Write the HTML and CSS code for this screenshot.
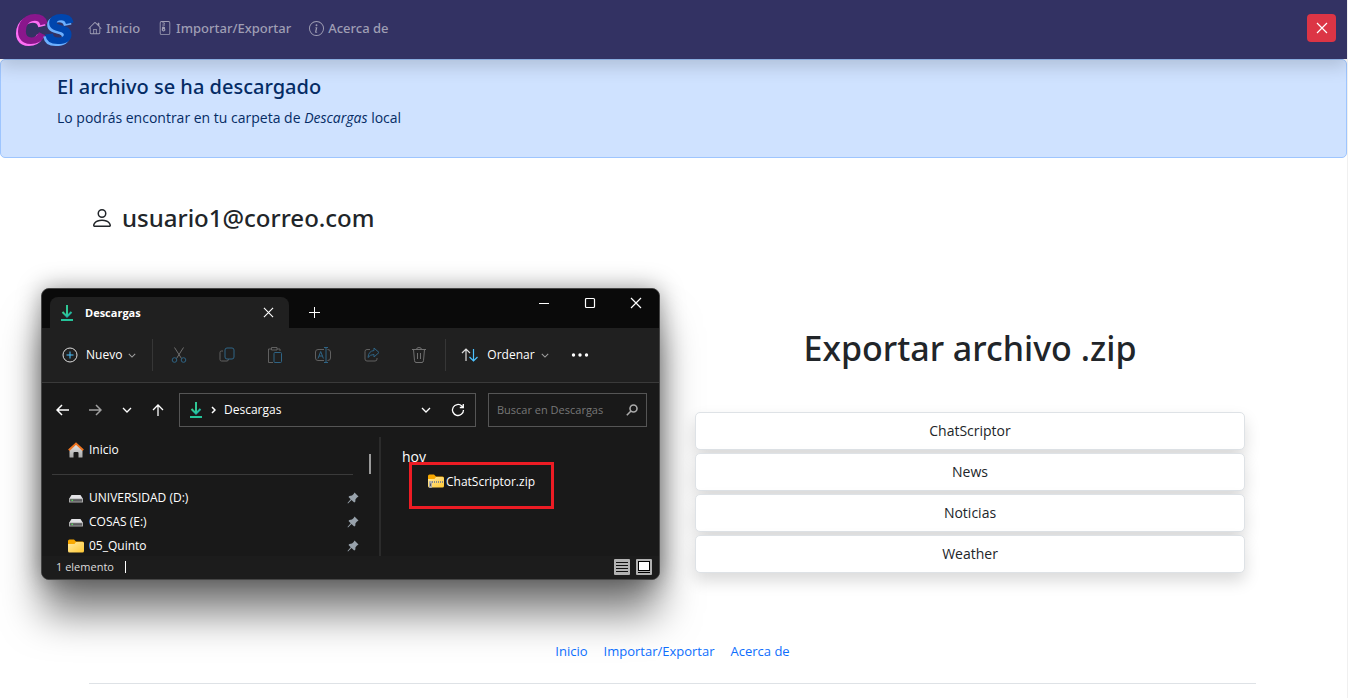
FILE: index.html
```html
<!DOCTYPE html>
<html lang="es">
<head>
<meta charset="utf-8">
<title>ChatScriptor</title>
<link rel="stylesheet" href="styles.css">
</head>
<body>
<svg class="defs" aria-hidden="true">
  <linearGradient id="teal" x1="0" y1="0" x2="1" y2="1"><stop offset="0" stop-color="#3ad08c"/><stop offset="1" stop-color="#12a5ad"/></linearGradient>
  <linearGradient id="gold" x1="0" y1="0" x2="1" y2="1"><stop offset="0" stop-color="#ffe9a0"/><stop offset="1" stop-color="#ffc833"/></linearGradient>
  <linearGradient id="wall" x1="0" y1="0" x2="0" y2="1"><stop offset="0" stop-color="#e8e8e8"/><stop offset="1" stop-color="#a8a8a8"/></linearGradient>
  <symbol id="download" viewBox="0 0 14 18"><path d="M2.500 8 7 12.500 11.500 8" fill="none" stroke="url(#teal)" stroke-width="2"/><path d="M7 1v11" stroke="#2fc795" stroke-width="2"/><path d="M1 16h12" stroke="#25c49a" stroke-width="2"/></symbol>
  <symbol id="chevron" viewBox="0 0 10 6"><path d="M1 1l4 4 4-4" fill="none" stroke="currentColor" stroke-width="1.300"/></symbol>
  <symbol id="cross" viewBox="0 0 12 12"><path d="M1 1l10 10M11 1L1 11" fill="none" stroke="currentColor" stroke-width="1.200"/></symbol>
  <symbol id="drive" viewBox="0 0 16 16"><path d="M3.500 5h9L15 9H1z" fill="#e3e3e6"/><rect x="1" y="8.500" width="14" height="4" rx=".6" fill="#aaa"/><rect x="2" y="9.200" width="12" height="2.400" fill="#5b5b5e"/><rect x="3.500" y="9.700" width="1.500" height="1.300" fill="#55dd55"/></symbol>
  <symbol id="folder" viewBox="0 0 16 14"><path d="M0 2q0-1.500 1.500-1.500H6L8 2.500h6.500Q16 2.500 16 4v3H0z" fill="#f8a800"/><path d="M0 5h6.500L8 3h6.500Q16 3 16 4.500V12q0 1.500-1.500 1.500h-13Q0 13.500 0 12z" fill="url(#gold)"/></symbol>
  <symbol id="pin" viewBox="0 0 12 12"><path d="M7.500.5 11.500 4.500 10 5.500 8.500 7.200 8.300 9.700 7.200 10.500 4.500 8 1 11.500.5 11 3.700 7.300 1.500 5 2.400 4 5 3.500 6.700 2z" fill="#98a2ab"/></symbol>
</svg>

<nav class="navbar">
  <a class="brand" href="#" aria-label="CS">
    <svg width="60" height="38" viewBox="0 0 60 38">
      <text class="brand-c" x="2" y="32">C</text>
      <text class="brand-s" x="31" y="32">S</text>
    </svg>
  </a>
  <a class="nav-link" href="#">
    <svg width="14" height="14" viewBox="0 0 16 16" fill="currentColor"><path d="M8.707 1.500a1 1 0 0 0-1.414 0L.646 8.146a.5.5 0 0 0 .708.708L2 8.207V13.500A1.500 1.500 0 0 0 3.500 15h9a1.500 1.500 0 0 0 1.500-1.500V8.207l.646.647a.5.5 0 0 0 .708-.708L13 5.793V2.500a.5.5 0 0 0-.5-.5h-1a.5.5 0 0 0-.5.5v1.293zM13 7.207V13.500a.5.5 0 0 1-.5.5H10V9H6v5H3.500a.5.5 0 0 1-.5-.5V7.207l5-5zM7 10h2v4H7z" fill-rule="evenodd"/></svg>
    Inicio</a>
  <a class="nav-link" href="#">
    <svg width="14" height="14" viewBox="0 0 16 16" fill="currentColor"><path fill-rule="evenodd" d="M4.500 7.500a1 1 0 0 1 1-1h1.500a1 1 0 0 1 1 1v.938l.4 1.599a1 1 0 0 1-.416 1.074l-.93.620a1 1 0 0 1-1.409 0l-.93-.620a1 1 0 0 1-.415-1.074l.2-1.599zM6 9v1.500h1V9z"/><path d="M2 2a2 2 0 0 1 2-2h8a2 2 0 0 1 2 2v12a2 2 0 0 1-2 2H4a2 2 0 0 1-2-2zm2-1a1 1 0 0 0-1 1v12a1 1 0 0 0 1 1h8a1 1 0 0 0 1-1V2a1 1 0 0 0-1-1z" fill-rule="evenodd"/><path d="M5 1h1.500v1H8v1H6.500v1H8v1H6.500v1H5V5h1.500V4H5V3h1.500V2H5z"/></svg>
    Importar/Exportar</a>
  <a class="nav-link" href="#">
    <svg width="15" height="15" viewBox="0 0 16 16" fill="currentColor"><path d="M8 15A7 7 0 1 1 8 1a7 7 0 0 1 0 14m0 1A8 8 0 1 0 8 0a8 8 0 0 0 0 16"/><path d="m8.930 6.588-2.290.287-.082.380.450.083c.294.070.352.176.288.469l-.738 3.468c-.194.897.105 1.319.808 1.319.545 0 1.178-.252 1.465-.598l.088-.416c-.2.176-.492.246-.686.246-.275 0-.375-.193-.304-.533zM9 4.500a1 1 0 1 1-2 0 1 1 0 0 1 2 0"/></svg>
    Acerca de</a>
  <button class="logout" type="button" aria-label="Cerrar sesión"><svg width="12" height="12"><use href="#cross"/></svg></button>
</nav>

<section class="alert" role="alert">
  <h4>El archivo se ha descargado</h4>
  <p>Lo podrás encontrar en tu carpeta de <em>Descargas</em> local</p>
</section>

<h3 class="user">
  <svg width="24" height="24" viewBox="0 0 16 16" fill="currentColor"><path d="M8 8a3 3 0 1 0 0-6 3 3 0 0 0 0 6m2-3a2 2 0 1 1-4 0 2 2 0 0 1 4 0m4 8c0 1-1 1-1 1H3s-1 0-1-1 1-4 6-4 6 3 6 4m-1-.004c-.001-.246-.154-.986-.832-1.664C11.516 10.680 10.289 10 8 10s-3.516.680-4.168 1.332c-.678.678-.830 1.418-.832 1.664z"/></svg>
  usuario1@correo.com
</h3>

<main class="content">
  <section class="window" aria-label="Descargas">
    <header class="titlebar">
      <div class="tab">
        <svg width="14" height="18"><use href="#download"/></svg>
        <span>Descargas</span>
        <button type="button" class="tab-close" aria-label="Cerrar pestaña"><svg width="11" height="11"><use href="#cross"/></svg></button>
      </div>
      <button type="button" class="tab-add" aria-label="Nueva pestaña"><svg width="11" height="11" viewBox="0 0 11 11"><path d="M5.500 0v11M0 5.500h11" stroke="currentColor"/></svg></button>
      <div class="controls">
        <button type="button" aria-label="Minimizar"><svg width="12" height="12" viewBox="0 0 12 12"><path d="M1 6.500h10" stroke="currentColor"/></svg></button>
        <button type="button" aria-label="Maximizar"><svg width="12" height="12" viewBox="0 0 12 12"><rect x="1.500" y="1.500" width="9" height="9" rx="1" fill="none" stroke="currentColor" stroke-width="1.200"/></svg></button>
        <button type="button" aria-label="Cerrar"><svg width="12" height="12"><use href="#cross"/></svg></button>
      </div>
    </header>

    <div class="toolbar">
      <button type="button" class="tool new">
        <svg width="16" height="16" viewBox="0 0 16 16" fill="none"><circle cx="8" cy="8" r="7" stroke="#ddd"/><path d="M8 4.500v7M4.500 8h7" stroke="#4cc2ff"/></svg>
        Nuevo <svg class="dim" width="8" height="5"><use href="#chevron"/></svg></button>
      <div class="tool-icons">
        <button type="button" aria-label="Cortar"><svg width="16" height="16" viewBox="0 0 16 16" fill="none"><path d="M3.500.5l7 11M12.500.5l-7 11" stroke="#707070"/><circle cx="3.500" cy="13" r="2.300" stroke="#2f6485"/><circle cx="12.500" cy="13" r="2.300" stroke="#2f6485"/></svg></button>
        <button type="button" aria-label="Copiar"><svg width="16" height="16" viewBox="0 0 16 16" fill="none"><path d="M4 4H2.500Q1 4 1 5.500v7Q1 14 2.500 14H8q1.500 0 1.500-2" stroke="#606060"/><rect x="6" y="1" width="9" height="11" rx="2" stroke="#2f6485"/></svg></button>
        <button type="button" aria-label="Pegar"><svg width="16" height="16" viewBox="0 0 16 16" fill="none"><path d="M4.500 2H1.500v13.500H6M10 2h3v2M4.500.5H10V3H4.500z" stroke="#606060"/><rect x="7" y="5.500" width="7.500" height="10" rx="1" stroke="#2f6485"/></svg></button>
        <button type="button" aria-label="Cambiar nombre"><svg width="18" height="16" viewBox="0 0 18 16" fill="none"><path d="M10 2.500H4Q1.500 2.500 1.500 5v6q0 2.500 2.500 2.500h6M13.500 2.500Q16.500 2.500 16.500 5v6q0 2.500-3 2.500" stroke="#606060"/><path d="M10 .5h4M12 .5v15M10 15.500h4M4 11.500 6.700 4.500 9.400 11.500M5 9h3.500" stroke="#2f6485"/></svg></button>
        <button type="button" aria-label="Compartir"><svg width="16" height="16" viewBox="0 0 16 16" fill="none"><path d="M6 2.500H3Q1 2.500 1 4.500V12q0 2 2 2h8q2 0 2-2v-1" stroke="#606060"/><path d="M10 1l5 4.500-5 4.500V7.500Q6 7.500 4 10.500 4.500 4 10 3.500z" stroke="#2f6485"/></svg></button>
        <button type="button" aria-label="Eliminar"><svg width="16" height="16" viewBox="0 0 16 16" fill="none" stroke="#707070"><path d="M1 2.500h14M5.500 2.500Q5.500.5 8 .5t2.500 2M2.500 2.500l1 11Q3.700 15.500 5 15.500h6q1.300 0 1.500-2l1-11M6.500 6v6M9.500 6v6"/></svg></button>
      </div>
      <button type="button" class="tool sort">
        <svg width="18" height="14" viewBox="0 0 18 14" fill="none"><path d="M5 13V1M1 5l4-4 4 4" stroke="#ddd" stroke-width="1.200"/><path d="M12.500 1v12M8.500 9l4 4 4-4" stroke="#4cc2ff" stroke-width="1.200"/></svg>
        Ordenar <svg class="dim" width="8" height="5"><use href="#chevron"/></svg></button>
      <button type="button" class="more" aria-label="Más"><svg width="18" height="4" viewBox="0 0 18 4" fill="currentColor"><circle cx="2.500" cy="2" r="1.700"/><circle cx="9" cy="2" r="1.700"/><circle cx="15.500" cy="2" r="1.700"/></svg></button>
    </div>

    <div class="address">
      <div class="arrows">
        <button type="button" aria-label="Atrás"><svg width="13" height="12" viewBox="0 0 13 12" fill="none" stroke="currentColor" stroke-width="1.500"><path d="M13 6H1M6 1L1 6l5 5"/></svg></button>
        <button type="button" class="dim" aria-label="Adelante"><svg width="13" height="12" viewBox="0 0 13 12" fill="none" stroke="currentColor" stroke-width="1.500"><path d="M0 6h12M7 1l5 5-5 5"/></svg></button>
        <button type="button" aria-label="Recientes"><svg width="10" height="6"><use href="#chevron"/></svg></button>
        <button type="button" aria-label="Subir"><svg width="12" height="12" viewBox="0 0 12 12" fill="none" stroke="currentColor" stroke-width="1.300"><path d="M6 12V1M1 6l5-5 5 5"/></svg></button>
      </div>
      <div class="path">
        <svg width="14" height="18"><use href="#download"/></svg>
        <svg width="5" height="8" viewBox="0 0 5 8"><path d="M1 1l3 3-3 3" fill="none" stroke="currentColor" stroke-width="1.500"/></svg>
        <span>Descargas</span>
        <button type="button" class="open" aria-label="Historial"><svg width="10" height="6"><use href="#chevron"/></svg></button>
        <button type="button" aria-label="Actualizar"><svg width="14" height="14" viewBox="0 0 14 14" fill="none" stroke="currentColor" stroke-width="1.300"><path d="M12.500 7A5.500 5.500 0 1 1 10.800 3L12 4.200M12.300 1v3.500H8.800"/></svg></button>
      </div>
      <label class="search">
        <input type="text" placeholder="Buscar en Descargas" aria-label="Buscar en Descargas">
        <svg width="12" height="12" viewBox="0 0 12 12" fill="none" stroke="#aaa" stroke-width="1.600"><circle cx="7.500" cy="4.500" r="3.500"/><path d="M5 7L.8 11.200"/></svg>
      </label>
    </div>

    <div class="panes">
      <aside class="side">
        <a class="home" href="#"><svg width="16" height="16" viewBox="0 0 16 16"><path d="M1.500 7 8 1.500 14.500 7v8q0 .5-.5.5h-3.500V11q0-1-1-1h-3q-1 0-1 1v4.500H2q-.5 0-.5-.5z" fill="url(#wall)"/><path d="M.8 8.200 8 1.600l7.200 6.600" fill="none" stroke="#ee7420" stroke-width="2"/></svg>Inicio</a>
        <ul class="places">
          <li><svg width="16" height="16"><use href="#drive"/></svg>UNIVERSIDAD (D:)<svg class="pin" width="12" height="12"><use href="#pin"/></svg></li>
          <li><svg width="16" height="16"><use href="#drive"/></svg>COSAS (E:)<svg class="pin" width="12" height="12"><use href="#pin"/></svg></li>
          <li><svg width="16" height="14"><use href="#folder"/></svg>05_Quinto<svg class="pin" width="12" height="12"><use href="#pin"/></svg></li>
        </ul>
      </aside>
      <div class="scroll"><span></span></div>
      <div class="files">
        <h5>hoy</h5>
        <div class="file">
          <svg width="16" height="14" viewBox="0 0 16 14"><use href="#folder" width="16" height="14"/><path d="M2 8h14" stroke="#888" stroke-width="2" stroke-dasharray="1 1"/><rect x="1" y="7" width="3" height="7" rx="1" fill="#aaa"/><path d="M2.500 9.500v2.500" stroke="#555"/></svg>ChatScriptor.zip
        </div>
      </div>
    </div>

    <footer class="status">
      <span class="count">1 elemento</span>
      <button type="button" aria-label="Detalles"><svg width="16" height="16" viewBox="0 0 16 16"><rect width="16" height="16" rx="1" fill="#b2b2b2"/><path d="M2 3.500h12M2 6.500h12M2 9.500h12M2 12.500h12" stroke="#111"/></svg></button>
      <button type="button" aria-label="Iconos grandes"><svg width="16" height="16" viewBox="0 0 16 16"><rect width="16" height="16" rx="1" fill="#b2b2b2"/><rect x="2.500" y="2.500" width="11" height="9" fill="#fff" stroke="#000"/><path d="M2 13.500h12" stroke="#000"/></svg></button>
    </footer>
  </section>

  <section class="export">
    <h1>Exportar archivo .zip</h1>
    <div class="options">
      <button type="button">ChatScriptor</button>
      <button type="button">News</button>
      <button type="button">Noticias</button>
      <button type="button">Weather</button>
    </div>
  </section>
</main>

<footer class="footer">
  <a href="#">Inicio</a>
  <a href="#">Importar/Exportar</a>
  <a href="#">Acerca de</a>
</footer>
</body>
</html>
```
FILE: styles.css
```css
* { box-sizing: border-box; }

html { background: #fff; }
body {
  min-height: 100vh;
  margin: 0;
  border-right: 1px solid #f0f0f0;
  color: #212529;
  font-family: "Open Sans", "Noto Sans", sans-serif;
  font-size: 14px;
  line-height: 20px;
}

h1, h3, h4, h5, p, ul { margin: 0; padding: 0; }
h1, h3, h4, .nav-link { font-family: "Noto Sans", "Open Sans", sans-serif; font-weight: 500; }
a { text-decoration: none; color: inherit; }
svg { display: block; flex: none; }
button {
  display: flex;
  align-items: center;
  justify-content: center;
  padding: 0;
  border: 0;
  background: none;
  color: inherit;
  font: inherit;
}
.defs { position: absolute; width: 0; height: 0; }

.navbar {
  position: relative;
  display: flex;
  align-items: center;
  gap: 18px;
  height: 59px;
  padding: 0 11px 3px 15px;
  background: #333263;
  box-shadow: 0 8px 16px rgba(0, 0, 0, .15);
}
.brand { margin: 3px -5px 0 0; }
.brand svg { overflow: visible; }
.brand text { font: italic 700 40px/1 "Liberation Sans", sans-serif; stroke-width: 2px; }
.brand-c { fill: #8a178c; stroke: #8a178c; filter: drop-shadow(-2px 2px 0 #ff6ff5); }
.brand-s { fill: #0046ae; stroke: #0046ae; filter: drop-shadow(-2px 2px 0 #6cb0ff); }
.nav-link {
  display: flex;
  align-items: center;
  gap: 4px;
  color: #9f9eb4;
  font-size: 13px;
}
.logout {
  width: 29px;
  height: 28px;
  margin-left: auto;
  border-radius: 4px;
  background: #dc3545;
  color: #fff;
}

.alert {
  height: 99px;
  padding: 13px 56px;
  border: 1px solid #9ec5fe;
  border-radius: 5px;
  background: #cfe2ff;
  color: #052c65;
}
.alert h4 { font-size: 20px; line-height: 28px; }
.alert p { margin-top: 7px; }

.user {
  display: flex;
  align-items: center;
  gap: 8px;
  padding: 44px 90px 0;
  font-size: 24px;
  line-height: 32px;
}

.content {
  display: grid;
  grid-template-columns: 619fr 550fr;
  gap: 35px;
  padding: 54px 102px 0 41px;
}

.window {
  display: flex;
  flex-direction: column;
  overflow: hidden;
  border: 1px solid #454545;
  border-radius: 8px;
  background: #191919;
  color: #fff;
  font-size: 12px;
  line-height: 16px;
  box-shadow: 0 0 24px rgba(0, 0, 0, .4), 0 36px 40px -2px rgba(0, 0, 0, .5);
}
.titlebar { display: flex; height: 39px; padding-left: 8px; background: #0a0a0a; }
.tab {
  display: flex;
  align-items: center;
  width: 239px;
  margin-top: 8px;
  padding: 0 15px 0 10px;
  border-radius: 8px 8px 0 0;
  background: #202020;
  font-size: 11px;
  font-weight: 700;
}
.tab span { margin-left: 11px; }
.tab-close { margin-left: auto; }
.tab-add { margin: 8px 0 0 20px; }
.controls { display: flex; gap: 34px; height: 28px; margin-left: auto; padding-right: 17px; }

.toolbar {
  display: flex;
  align-items: center;
  height: 55px;
  padding-left: 20px;
  border-bottom: 1px solid #3a3a3a;
  background: #202020;
}
.tool { gap: 8px; height: 32px; }
.tool .dim { margin-left: -2px; }
.dim { color: #a0a0a0; }
.tool-icons {
  display: flex;
  justify-content: space-between;
  width: 294px;
  height: 32px;
  margin-left: 16px;
  padding: 0 18px;
  border: solid #363636;
  border-width: 0 1px;
}
.sort { margin-left: 15px; }
.more { margin-left: 22px; }

.address {
  display: grid;
  grid-template-columns: 124px 297fr 159fr;
  gap: 12px;
  height: 54px;
  padding: 10px 12px 10px 1px;
}
.arrows { display: flex; align-items: center; justify-content: space-between; padding: 0 3px 0 13px; }
.path, .search { display: flex; align-items: center; min-width: 0; border: 1px solid #555; }
.path { gap: 8px; padding: 0 10px 0 9px; }
.path .open { margin: 0 12px 0 auto; }
.search { padding: 0 8px; }
.search input {
  flex: 1;
  min-width: 0;
  padding: 0;
  border: 0;
  outline: 0;
  background: none;
  color: #fff;
  font: inherit;
  font-size: 11px;
}
.search input::placeholder { color: #777; opacity: 1; }

.panes { display: flex; height: 119px; }
.side { width: 319px; padding: 5px 8px 0 10px; }
.home {
  display: flex;
  gap: 5px;
  height: 33px;
  padding-left: 16px;
  border-bottom: 1px solid #3a3a3a;
}
.places { margin: 11px -6px 0 16px; list-style: none; }
.places li { display: flex; align-items: center; gap: 5px; height: 24px; }
.pin { margin-left: auto; }
.scroll { width: 20px; padding: 17px 0 0 8px; border-right: 2px solid #2b2b2b; }
.scroll span { display: block; width: 2px; height: 20px; background: #9a9a9a; }
.files { padding: 11px 0 0 21px; }
.files h5 { height: 14px; font-size: 14px; font-weight: 400; line-height: 18px; }
.file {
  position: relative;
  display: flex;
  gap: 2px;
  width: 145px;
  height: 47px;
  margin-left: 7px;
  padding: 9px 16px;
  border: 3px solid #ed1c24;
  background: #191919;
}

.status {
  display: flex;
  align-items: center;
  gap: 6px;
  height: 23px;
  padding: 0 7px 2px 14px;
  background: #1c1c1c;
  color: #ddd;
  font-size: 11px;
}
.count { margin-right: auto; padding-right: 11px; border-right: 1px solid #fff; line-height: 12px; }

.export { padding-top: 36px; }
.export h1 { text-align: center; font-size: 34px; line-height: 48px; }
.options { display: grid; gap: 3px; margin-top: 40px; }
.options button {
  height: 38px;
  border: 1px solid #dee2e6;
  border-radius: 5px;
  background: #fff;
  box-shadow: 0 8px 16px rgba(0, 0, 0, .15);
}

.footer {
  display: flex;
  justify-content: center;
  gap: 16px;
  margin: 61px 91px 0 89px;
  padding-bottom: 22px;
  border-bottom: 1px solid #dee2e6;
  color: #0d6efd;
  font-size: 13px;
}
```
